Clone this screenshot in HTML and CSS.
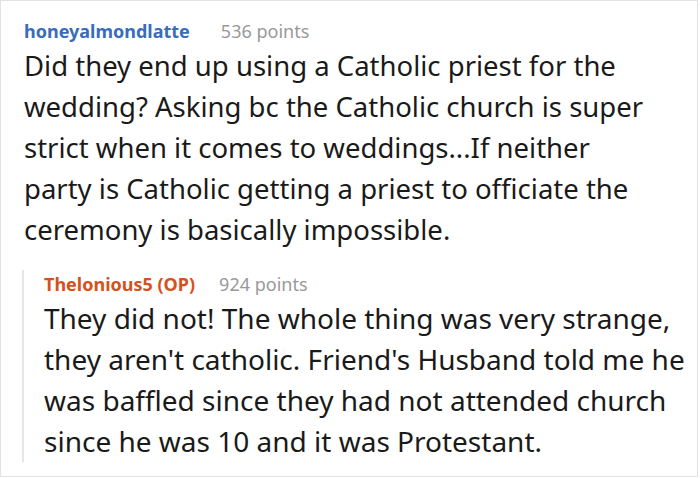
FILE: index.html
```html
<!DOCTYPE html>
<html>
<head>
<meta charset="utf-8">
<link rel="stylesheet" href="styles.css">
</head>
<body>
<div class="frame">
  <div class="comment">
    <div class="meta">
      <span class="user">honeyalmondlatte</span>
      <span class="points">536 points</span>
    </div>
    <p class="text">Did they end up using a Catholic priest for the<br>wedding? Asking bc the Catholic church is super<br>strict when it comes to weddings...If neither<br>party is Catholic getting a priest to officiate the<br>ceremony is basically impossible.</p>
  </div>
  <div class="reply">
    <div class="meta">
      <span class="user op">Thelonious5 (OP)</span>
      <span class="points">924 points</span>
    </div>
    <p class="text">They did not! The whole thing was very strange,<br>they aren't catholic. Friend's Husband told me he<br>was baffled since they had not attended church<br>since he was 10 and it was Protestant.</p>
  </div>
</div>
</body>
</html>
```

FILE: styles.css
```css
html, body {
  margin: 0;
  padding: 0;
  background: #fff;
}
.frame {
  box-sizing: border-box;
  width: 698px;
  height: 477px;
  border: 1px solid #e2e2e2;
  padding: 16px 0 0 23px;
  font-family: "Noto Sans", "Open Sans", sans-serif;
  color: #222;
  overflow: hidden;
}
.meta {
  display: flex;
  align-items: baseline;
  gap: 31px;
  font-size: 18px;
  line-height: 28px;
}
.user {
  font-weight: 700;
  color: #3a6cbc;
}
.user.op {
  color: #d6521c;
}
.points {
  color: #999;
}
.text {
  margin: 0;
  line-height: 41px;
  color: #1a1a1a;
  white-space: nowrap;
}
.comment .text {
  font-size: 27.5px;
}
.reply {
  margin-top: 20px;
  margin-left: -2px;
  border-left: 2px solid #e6e6e6;
  padding-left: 20px;
}
.reply .meta {
  gap: 24px;
}
.reply .text {
  font-size: 28px;
  margin-bottom: -6px;
}
```
